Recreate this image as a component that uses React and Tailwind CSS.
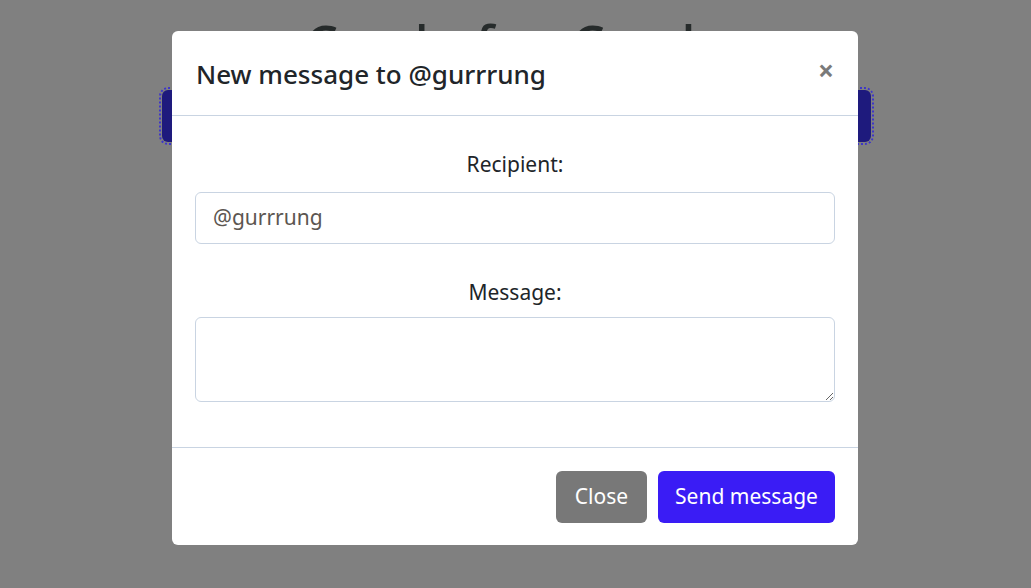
export default function App() {
  const font = { fontFamily: '"Noto Sans", "Open Sans", sans-serif' };
  return (
    <div className="relative w-[1031px] h-[588px] overflow-hidden bg-[#808080]" style={font}>
      <div className="flex flex-col items-center pt-[14px]">
        <h1 className="text-[52px] leading-[60px] font-medium text-[#262b2b] tracking-wider">Cards for Cards</h1>
        <div className="mt-[16px] ml-[2px] w-[709px] h-[52px] rounded-[6px] bg-[#1e1a7d] outline-2 outline-dotted outline-[#3d35c9] outline-offset-1"></div>
      </div>

      <div className="absolute left-[172px] top-[31px] w-[686px] h-[514px] bg-white rounded-[6px] flex flex-col">
        <div className="h-[85px] flex items-center justify-between pl-[24px] pr-[24px] border-b border-[#c9d4e2]">
          <h2 className="text-[26px] font-medium text-[#212529] pt-[2px]">New message to @gurrrung</h2>
          <span className="text-[#7a7a7a] text-[28px] font-bold leading-none -mt-[6px]">×</span>
        </div>
        <div className="flex-1 px-[23px] pt-[34px] flex flex-col">
          <label className="text-center text-[21px] text-[#212529] leading-[28px]">Recipient:</label>
          <div className="mt-[14px] h-[52px] border border-[#c9d4e2] rounded-[6px] flex items-center px-[17px] text-[21px] text-[#5c5651]">@gurrrung</div>
          <label className="mt-[34px] text-center text-[21px] text-[#212529] leading-[28px]">Message:</label>
          <textarea className="mt-[11px] h-[85px] border border-[#c9d4e2] rounded-[6px] resize-y outline-none" />
        </div>
        <div className="h-[98px] border-t border-[#c9d4e2] flex items-center justify-end gap-[11px] px-[23px]">
          <button className="h-[52px] w-[91px] rounded-[6px] bg-[#787878] text-white text-[21px]">Close</button>
          <button className="h-[52px] w-[177px] rounded-[6px] bg-[#3a1cf5] text-white text-[21px]">Send message</button>
        </div>
      </div>
    </div>
  );
}
